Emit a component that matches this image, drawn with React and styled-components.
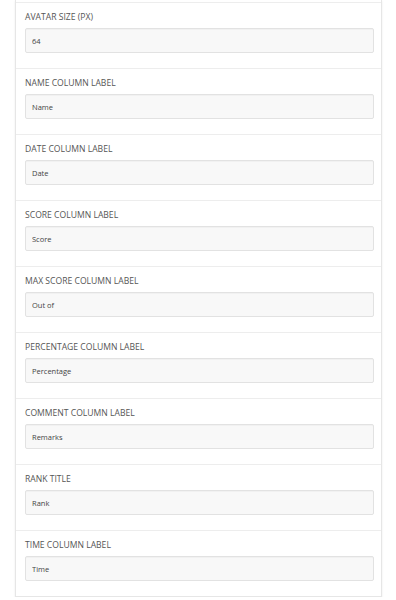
import React from "react";
import styled, { createGlobalStyle } from "styled-components";

const Global = createGlobalStyle`
  html, body { margin: 0; padding: 0; background: #fff; }
  body { font-family: "Open Sans", "Noto Sans", sans-serif; }
`;

const Page = styled.div`
  padding: 0 14px 0 15px;
  width: 396px;
  box-sizing: border-box;
`;

const Card = styled.div`
  background: #fff;
  border: 1px solid #e6e6e6;
  border-top: none;
  padding-top: 2px;
  box-shadow: 0 1px 2px rgba(0, 0, 0, 0.08);
`;

const Field = styled.div`
  border-top: 1px solid #ededed;
  padding: 9px 7px 15px 9px;
  display: flex;
  flex-direction: column;
  gap: 5px;
`;

const Label = styled.label`
  font-size: 8.6px;
  line-height: 11px;
  color: #555;
  text-transform: uppercase;
`;

const Input = styled.input`
  box-sizing: border-box;
  height: 25px;
  width: 100%;
  border: 1px solid #e2e2e2;
  border-radius: 2px;
  background: #f8f8f8;
  padding: 0 6px;
  font-family: inherit;
  font-size: 7.5px;
  color: #444;
  outline: none;
  box-shadow: inset 0 1px 1px rgba(0, 0, 0, 0.03);
`;

const fields = [
  ["Avatar size (px)", "64"],
  ["Name column label", "Name"],
  ["Date column label", "Date"],
  ["Score column label", "Score"],
  ["Max score column label", "Out of"],
  ["Percentage column label", "Percentage"],
  ["Comment column label", "Remarks"],
  ["Rank title", "Rank"],
  ["Time column label", "Time"],
];

export default function App() {
  return (
    <>
      <Global />
      <Page>
        <Card>
          {fields.map(([label, value]) => (
            <Field key={label}>
              <Label>{label}</Label>
              <Input defaultValue={value} readOnly />
            </Field>
          ))}
        </Card>
      </Page>
    </>
  );
}
